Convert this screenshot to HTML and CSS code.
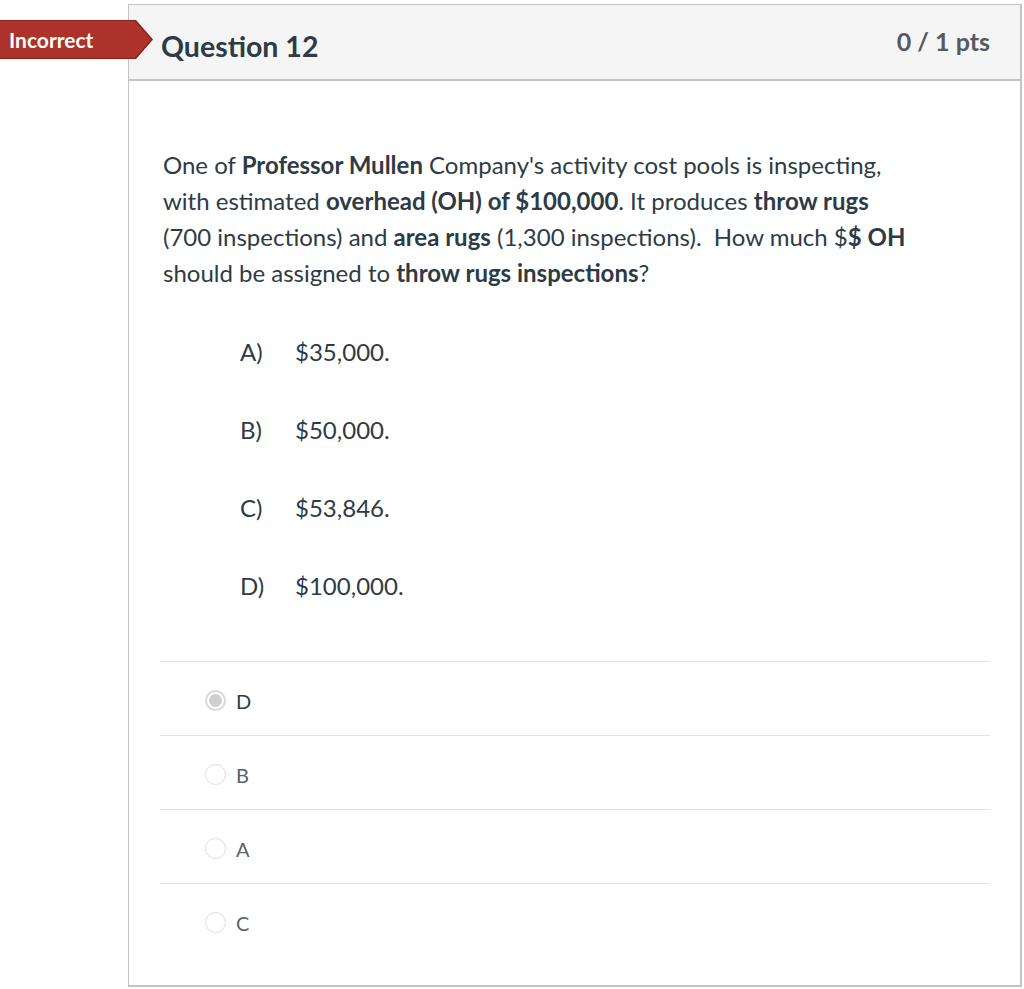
FILE: index.html
```html
<!DOCTYPE html>
<html lang="en">
  <head>
    <meta charset="UTF-8" />
    <meta name="viewport" content="width=device-width, initial-scale=1.0" />
    <title>Question 12</title>
    <link rel="stylesheet" href="styles.css">
  </head>
  <body>
    <div class="question-holder">
      <div class="answer-flag">Incorrect</div>

      <div class="question">
        <div class="question-header">
          <span class="question-title">Question 12</span>
          <span class="question-points">0 / 1 pts</span>
        </div>

        <div class="question-body">
          <p class="question-text">
            One of <strong>Professor Mullen</strong> Company's activity cost pools is inspecting,<br>
            with estimated <strong>overhead (OH) of $100,000</strong>. It produces <strong>throw rugs</strong><br>
            (700 inspections) and <strong>area rugs</strong> (1,300 inspections).&nbsp; How much $<strong>$ OH</strong><br>
            should be assigned to <strong>throw rugs inspections</strong>?
          </p>

          <ol class="choices">
            <li><span class="choice-letter">A)</span>$35,000.</li>
            <li><span class="choice-letter">B)</span>$50,000.</li>
            <li><span class="choice-letter">C)</span>$53,846.</li>
            <li><span class="choice-letter">D)</span>$100,000.</li>
          </ol>

          <div class="answers">
            <label class="answer selected">
              <span class="radio"></span>
              D
            </label>
            <label class="answer">
              <span class="radio"></span>
              B
            </label>
            <label class="answer">
              <span class="radio"></span>
              A
            </label>
            <label class="answer">
              <span class="radio"></span>
              C
            </label>
          </div>
        </div>
      </div>
    </div>
  </body>
</html>
```

FILE: styles.css
```css
:root {
  --text-color: #2d3b45;
  --muted-color: #5b6168;
  --border-color: #c4c4c4;
  --line-color: #e2e2e2;
  --header-bg: #f5f5f5;
  --flag-color: #ad3229;
  --flag-edge: #8a1f1a;
}

* {
  margin: 0;
  padding: 0;
  box-sizing: border-box;
}

body {
  font-family: Lato, "Open Sans", sans-serif;
  color: var(--text-color);
  background-color: #fff;
  padding: 4px 0 0 128px;
}

.question-holder {
  position: relative;
  width: 894px;
}

.answer-flag {
  position: absolute;
  top: 16px;
  left: -128px;
  width: 153px;
  height: 39px;
  padding-left: 9px;
  display: flex;
  align-items: center;
  background-color: var(--flag-edge);
  color: #fff;
  font-size: 21px;
  font-weight: 700;
  clip-path: polygon(0 0, 136px 0, 153px 50%, 136px 100%, 0 100%);
  z-index: 2;
}

.answer-flag::before {
  content: "";
  position: absolute;
  inset: 1px 1px 1px 0;
  background-color: var(--flag-color);
  clip-path: polygon(0 0, 135px 0, 151px 50%, 135px 100%, 0 100%);
  z-index: -1;
}

.question {
  border: 2px solid var(--border-color);
  border-top-width: 1px;
  border-left-width: 1px;
  height: 983px;
}

.question-header {
  height: 76px;
  background-color: var(--header-bg);
  border-bottom: 2px solid var(--border-color);
  display: flex;
  justify-content: space-between;
  align-items: center;
  padding: 0 30px 0 32px;
}

.question-title {
  font-size: 28.5px;
  font-weight: 700;
  color: var(--text-color);
  margin-top: 8px;
}

.question-points {
  font-size: 25px;
  font-weight: 700;
  color: #555a5e;
  margin-bottom: 2px;
}

.question-body {
  padding: 66px 30px 0 31px;
}

.question-text {
  font-size: 24px;
  line-height: 36px;
  padding-left: 3px;
  white-space: nowrap;
}

.question-text strong {
  font-weight: 700;
}

.choices {
  list-style: none;
  margin-top: 43px;
  padding-left: 80px;
}

.choices li {
  font-size: 24px;
  line-height: 36px;
  height: 78px;
}

.choice-letter {
  display: inline-block;
  width: 55px;
}

.answers {
  margin-top: 15px;
}

.answer {
  display: flex;
  align-items: center;
  gap: 10px;
  height: 74px;
  border-top: 1px solid var(--line-color);
  padding-left: 45px;
  padding-top: 4px;
  font-size: 20px;
  color: var(--muted-color);
}

.answer.selected {
  color: var(--text-color);
}

.radio {
  width: 21px;
  height: 21px;
  border-radius: 50%;
  border: 1px solid #dcdcdc;
  background-color: #fff;
  display: flex;
  align-items: center;
  justify-content: center;
}

.answer.selected .radio {
  border: 2px solid #dadada;
}

.answer.selected .radio::after {
  content: "";
  width: 13px;
  height: 13px;
  border-radius: 50%;
  background-color: #cfcfcf;
}
```
